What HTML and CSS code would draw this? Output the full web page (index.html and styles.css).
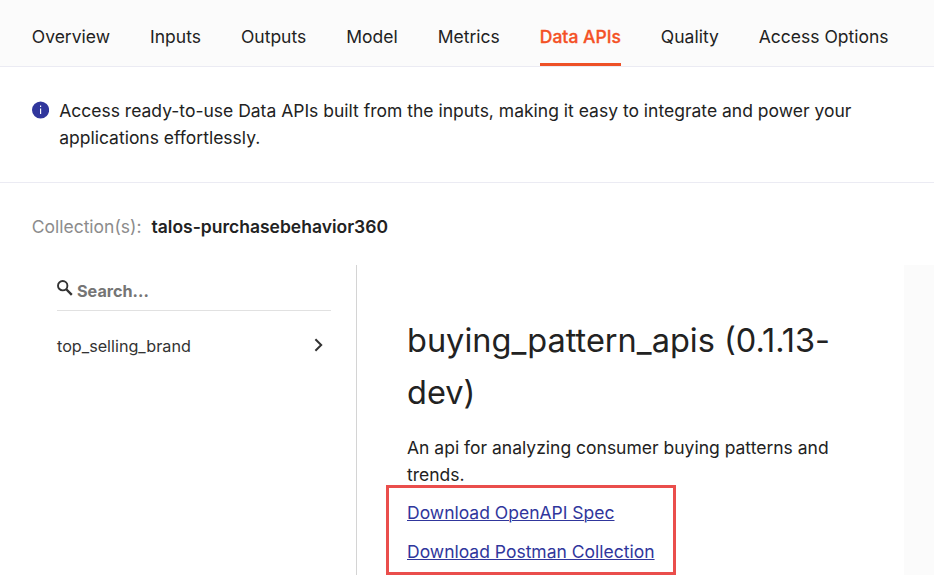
FILE: index.html
```html
<!DOCTYPE html>
<html lang="en">
<head>
<meta charset="utf-8">
<title>Data APIs</title>
<link rel="stylesheet" href="styles.css">
</head>
<body>
<nav class="tabs">
  <a class="tab">Overview</a>
  <a class="tab">Inputs</a>
  <a class="tab">Outputs</a>
  <a class="tab">Model</a>
  <a class="tab">Metrics</a>
  <a class="tab active">Data APIs</a>
  <a class="tab">Quality</a>
  <a class="tab">Access Options</a>
</nav>
<section class="intro">
  <svg class="info" viewBox="0 0 18 18"><circle cx="9" cy="9" r="9" fill="#30369c"/><path d="M9 7.3V13.2M9 4.4V5.9" stroke="#fff" stroke-width="1.2"/></svg>
  <p>Access ready-to-use Data APIs built from the inputs, making it easy to integrate and power your applications effortlessly.</p>
</section>
<div class="collection"><span>Collection(s):</span><strong>talos-purchasebehavior360</strong></div>
<main class="docs">
  <aside class="sidebar">
    <div class="search">
      <svg class="glass" viewBox="0 0 16 16"><circle cx="5.7" cy="5.7" r="4.7" fill="none" stroke="#333" stroke-width="1.9"/><path d="M9 9L14.8 14.8" stroke="#333" stroke-width="2.4"/></svg>
      <span>Search...</span>
    </div>
    <div class="item"><span>top_selling_brand</span><svg class="chevron" viewBox="0 0 10 14"><path d="M1.4 1.2L7.2 7L1.4 12.8" fill="none" stroke="#333" stroke-width="2"/></svg></div>
  </aside>
  <article class="content">
    <h1>buying_pattern_apis (0.1.13-dev)</h1>
    <p>An api for analyzing consumer buying patterns and trends.</p>
    <div class="downloads">
      <a href="#">Download OpenAPI Spec</a>
      <a href="#">Download Postman Collection</a>
    </div>
  </article>
  <div class="gutter"></div>
</main>
</body>
</html>
```
FILE: styles.css
```css
* { box-sizing: border-box; }
body { margin: 0; height: 575px; overflow: hidden; background: #fff; color: #222; font: 17.5px/27px Inter, sans-serif; display: flex; flex-direction: column; }
p, h1 { margin: 0; }
.tabs { height: 67px; flex: none; display: flex; gap: 40px; padding-left: 31.8px; background: #fbfbfb; border-bottom: 1px solid #ebebf3; }
.tab { height: 66px; padding-top: 23px; white-space: nowrap; }
.active { color: #f45126; font-weight: 500; -webkit-text-stroke: 0.3px #f45126; border-bottom: 3px solid #ee5127; }
.intro { height: 116px; flex: none; display: flex; gap: 10px; padding: 30px 60px 0 32px; border-bottom: 1px solid #ebebf3; }
.info { width: 17.2px; height: 18px; flex: none; margin-top: 4.4px; }
.collection { height: 82px; flex: none; display: flex; gap: 10px; padding: 30px 0 0 31.7px; }
.collection span { color: #8c8c8c; }
.collection strong { font-weight: 600; }
.docs { flex: 1; display: flex; min-height: 0; }
.sidebar { width: 357px; flex: none; border-right: 1px solid #d4d4d4; padding: 13px 25px 0 57px; font-size: 16.2px; color: #333; }
.search { height: 33px; display: flex; gap: 4px; border-bottom: 1px solid #e1e1e1; color: #757575; font-weight: 700; }
.glass { width: 16px; height: 16px; margin-top: 2px; }
.item { display: flex; justify-content: space-between; padding: 22px 7px 0 0; }
.chevron { width: 10px; height: 14px; margin-top: 5px; }
.content { width: 547px; flex: none; padding: 50px 50px 0; }
h1 { font-size: 32.5px; line-height: 52px; font-weight: 400; margin-bottom: 15px; }
.downloads { width: 290px; height: 90px; margin: -3px 0 0 -20.6px; padding: 11px 17.6px 0; border: 3px solid #ea4e4c; display: flex; flex-direction: column; gap: 12px; }
.downloads a { color: #30369c; text-decoration-thickness: 1px; }
.gutter { flex: 1; background: #fbfbfb; }
```
